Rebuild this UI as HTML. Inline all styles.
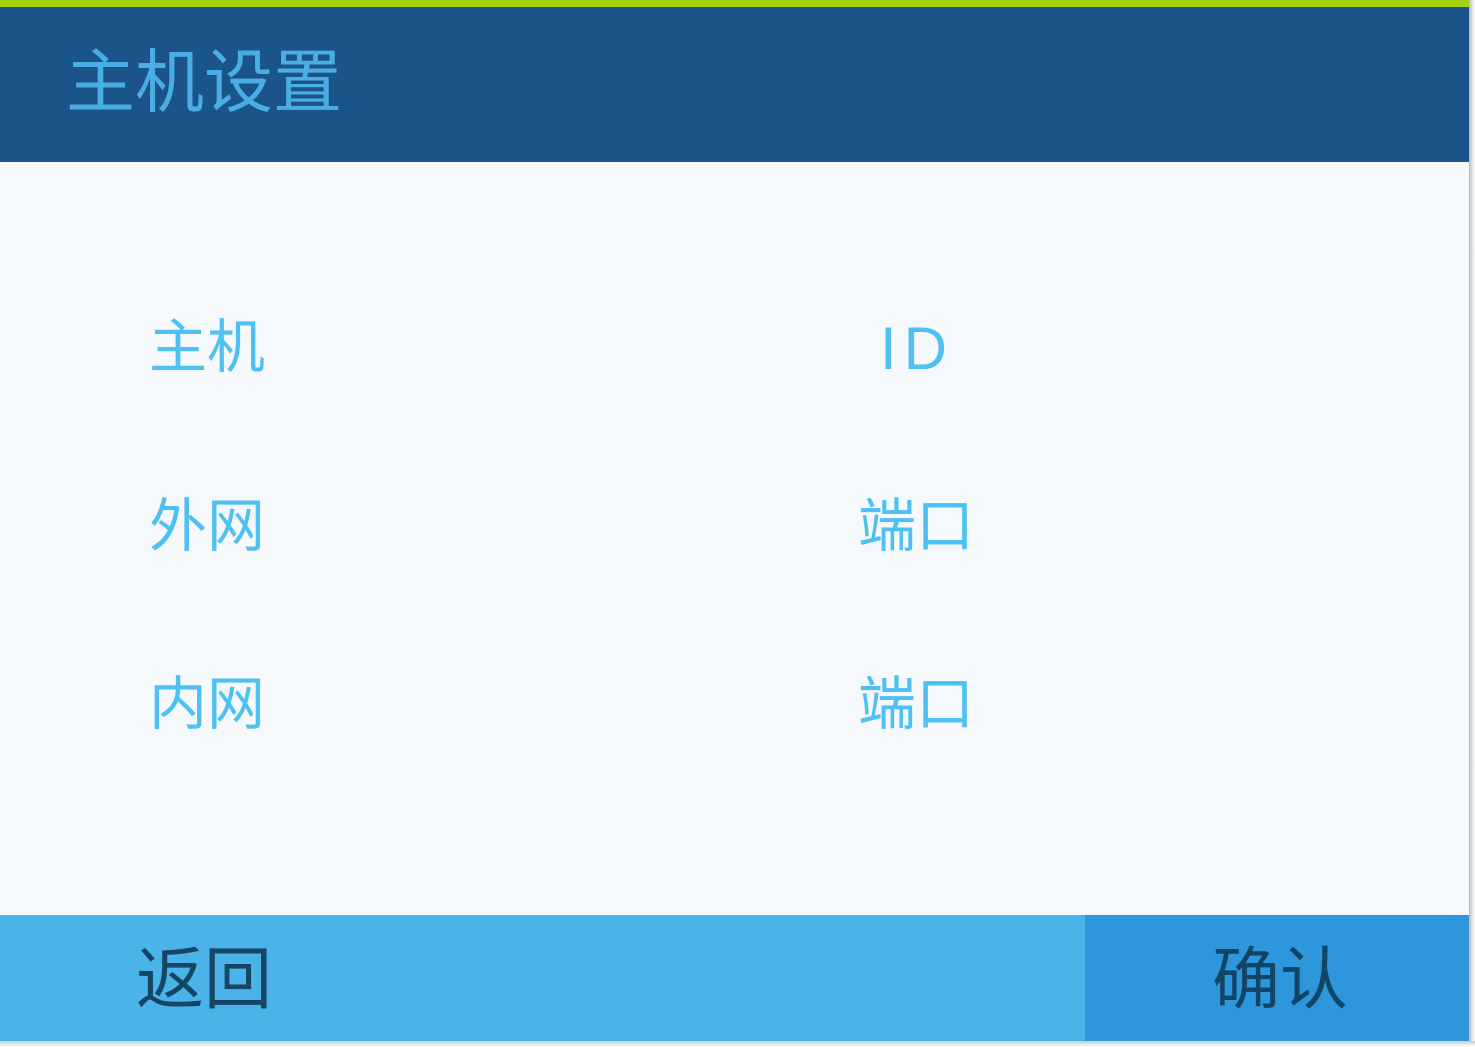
<!DOCTYPE html>
<html><head><meta charset="utf-8"><style>
*{margin:0;padding:0;box-sizing:border-box}
body{width:1475px;height:1047px;background:#fff;position:relative;overflow:hidden;font-family:"Liberation Sans","Noto Sans CJK SC",sans-serif}
.g{position:absolute;left:0;top:0;width:1469px;height:7px;background:#a4d40f}
.h{position:absolute;left:0;top:7px;width:1469px;height:155px;background:#1a5488}
.b{position:absolute;left:0;top:162px;width:1469px;height:753px;background:#f5f9fc}
.sh{position:absolute;left:1469px;top:0;width:6px;height:1047px;background:linear-gradient(90deg,#bbb,#fff)}
.bs{position:absolute;left:0;top:1041px;width:1475px;height:6px;background:linear-gradient(#ccc,#fff)}
.t{position:absolute;white-space:nowrap;line-height:1}
.f1{position:absolute;left:0;top:915px;width:1085px;height:126px;background:#4ab3e8}
.f2{position:absolute;left:1085px;top:915px;width:384px;height:126px;background:#2e96da}
.l{color:#4fc0f2;font-size:58px}
</style></head><body>
<div class="g"></div><div class="h"></div><div class="b"></div>
<div class="f1"></div><div class="f2"></div><div class="sh"></div><div class="bs"></div>
<div class="t" style="left:66px;top:48px;font-size:69px;color:#4aaee4">主机设置</div>
<div class="t l" style="left:149px;top:319px">主机</div>
<div class="t l" style="left:880px;top:319px;font-size:60px;letter-spacing:7px">ID</div>
<div class="t l" style="left:149px;top:498px">外网</div>
<div class="t l" style="left:858px;top:498px">端口</div>
<div class="t l" style="left:149px;top:676px">内网</div>
<div class="t l" style="left:858px;top:676px">端口</div>
<div class="t" style="left:136px;top:946px;font-size:68px;color:#164566">返回</div>
<div class="t" style="left:1212px;top:946px;font-size:68px;color:#124466">确认</div>
</body></html>
